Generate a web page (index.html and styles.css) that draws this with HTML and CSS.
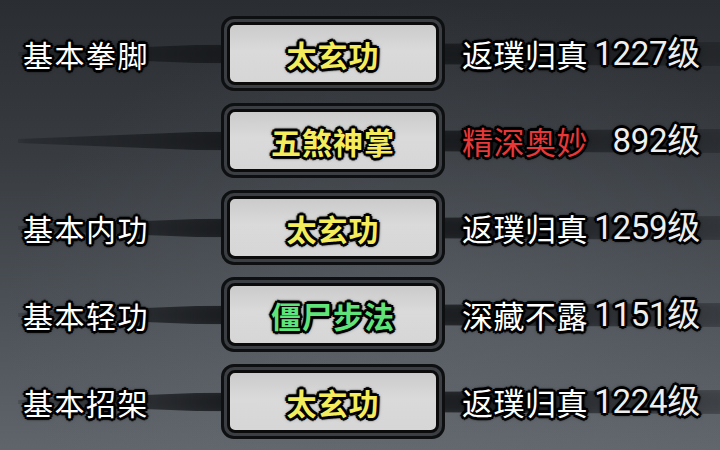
FILE: index.html
```html
<!DOCTYPE html>
<html lang="zh-CN">
<head>
  <meta charset="UTF-8" />
  <title>武学</title>
  <link rel="stylesheet" href="styles.css">
</head>
<body>
  <div class="list">
    <div class="row">
      <div class="label">基本拳脚</div>
      <div class="slot"><div class="slot-inner yellow">太玄功</div></div>
      <div class="info"><span class="rank">返璞归真</span><span class="level">1227级</span></div>
    </div>
    <div class="row">
      <div class="label"></div>
      <div class="slot"><div class="slot-inner yellow">五煞神掌</div></div>
      <div class="info"><span class="rank red">精深奥妙</span><span class="level">892级</span></div>
    </div>
    <div class="row">
      <div class="label">基本内功</div>
      <div class="slot"><div class="slot-inner yellow">太玄功</div></div>
      <div class="info"><span class="rank">返璞归真</span><span class="level">1259级</span></div>
    </div>
    <div class="row">
      <div class="label">基本轻功</div>
      <div class="slot"><div class="slot-inner green">僵尸步法</div></div>
      <div class="info"><span class="rank">深藏不露</span><span class="level">1151级</span></div>
    </div>
    <div class="row">
      <div class="label">基本招架</div>
      <div class="slot"><div class="slot-inner yellow">太玄功</div></div>
      <div class="info"><span class="rank">返璞归真</span><span class="level">1224级</span></div>
    </div>
  </div>
</body>
</html>
```

FILE: styles.css
```css
html, body {
  margin: 0;
  height: 100%;
}

body {
  width: 720px;
  height: 450px;
  overflow: hidden;
  font-family: "Noto Sans CJK SC", sans-serif;
  white-space: nowrap;
  background:
    radial-gradient(ellipse at 60% 70%, rgba(120,126,134,0.25), rgba(0,0,0,0) 70%),
    linear-gradient(180deg, #2a2d31 0%, #383c41 35%, #4d5258 70%, #60656b 100%);
}

.list {
  display: flex;
  flex-direction: column;
  gap: 12px;
  padding-top: 16px;
}

.row {
  position: relative;
  display: grid;
  grid-template-columns: 221px 224px 275px;
  grid-template-rows: 75px;
  height: 75px;
  align-items: center;
}

/* dark brush streak behind each row */
.row::before {
  content: "";
  position: absolute;
  left: 18px;
  right: -10px;
  top: 22px;
  height: 32px;
  background: linear-gradient(90deg, rgba(22,24,27,0.35), rgba(22,24,27,0.95) 30%, rgba(22,24,27,0.9) 65%, rgba(22,24,27,0.4));
  clip-path: polygon(0 44%, 25% 22%, 100% 12%, 100% 88%, 25% 78%, 0 56%);
  filter: blur(6px);
}

.label, .rank, .level, .slot-inner {
  text-shadow:
    2px 0 0 #000, -2px 0 0 #000, 0 2px 0 #000, 0 -2px 0 #000,
    2px 2px 0 #000, -2px 2px 0 #000, 2px -2px 0 #000, -2px -2px 0 #000,
    3px 0 1px #000, -3px 0 1px #000, 0 3px 1px #000, 0 -3px 1px #000,
    0 0 5px #000;
}

.label {
  position: relative;
  padding-left: 23px;
  color: #fff;
  font-size: 30px;
  letter-spacing: 1.5px;
  line-height: 1;
}

.slot {
  position: relative;
  box-sizing: border-box;
  height: 75px;
  padding: 3px;
  border: 3px solid #0e0f10;
  border-radius: 13px;
  background: #3b3f44;
}

.slot-inner {
  box-sizing: border-box;
  height: 100%;
  display: flex;
  align-items: center;
  justify-content: center;
  border: 3px solid #0b0b0b;
  border-radius: 8px;
  background: linear-gradient(180deg, #cbcbcb 0%, #dadada 45%, #d6d6d6 100%);
  font-size: 30px;
  font-weight: bold;
  letter-spacing: 1px;
  line-height: 1;
}

.yellow { color: #f4ec5c; }
.green { color: #5fe47a; }

.info {
  position: relative;
  display: flex;
  justify-content: space-between;
  align-items: center;
  padding-left: 17px;
  padding-right: 20px;
  line-height: 1;
}

.rank {
  color: #fff;
  font-size: 31px;
  letter-spacing: 0.5px;
}

.rank.red { color: #e83838; }

.level {
  color: #eeeeee;
  font-family: "Roboto", "Noto Sans CJK SC", sans-serif;
  font-size: 33px;
  letter-spacing: -0.3px;
}
```
